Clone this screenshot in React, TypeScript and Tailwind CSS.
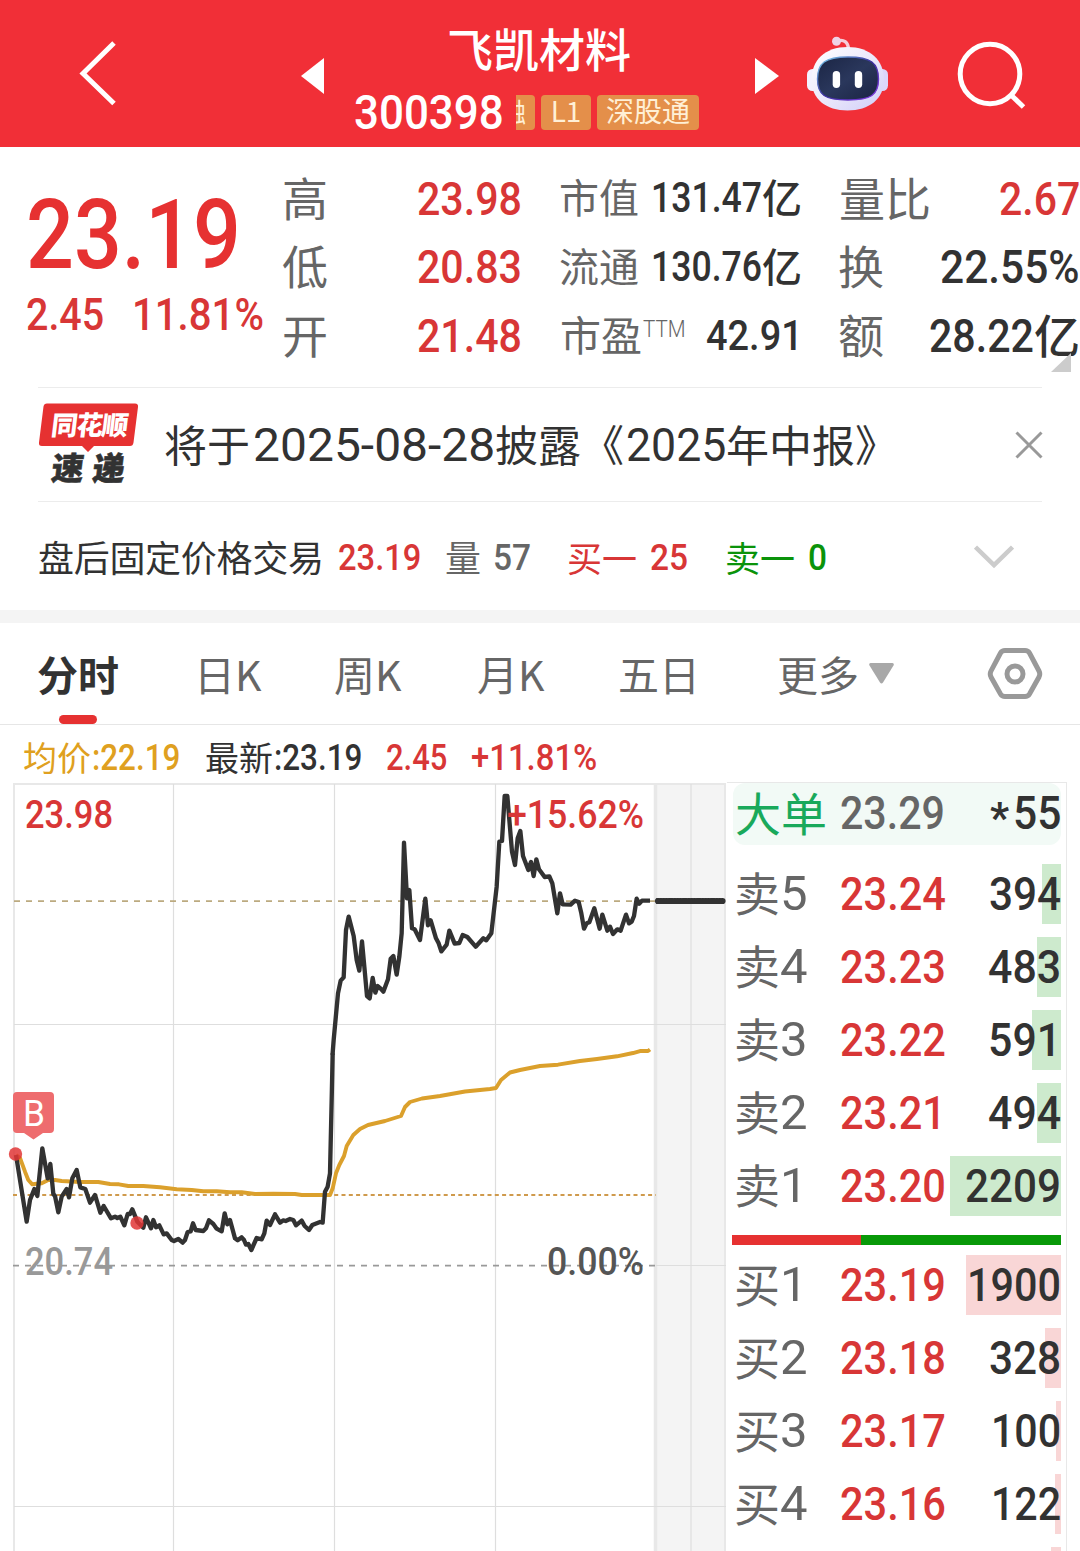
import React from "react";

type FitProps = {
  w: number;
  className?: string;
  children: React.ReactNode;
};

// Squeezes a number horizontally so that it fills exactly `w` pixels
const Fit = ({ w, className = "", children }: FitProps) => {
  const ref = React.useRef<HTMLSpanElement>(null);
  const [scale, setScale] = React.useState(1);

  React.useLayoutEffect(() => {
    if (ref.current) setScale(w / ref.current.offsetWidth);
  }, [w]);

  return (
    <span
      className={`inline-block shrink-0 whitespace-nowrap font-medium leading-none font-['Roboto',sans-serif] ${className}`}
      style={{ width: w }}
    >
      <span
        ref={ref}
        className="inline-block origin-left"
        style={{ transform: `scaleX(${scale})` }}
      >
        {children}
      </span>
    </span>
  );
};

const RobotIcon = () => (
  <svg width="82" height="76" viewBox="807 36 82 76" fill="none">
    <defs>
      <linearGradient id="head" x1="0" y1="0" x2="1" y2="1">
        <stop offset="0" stopColor="#ffffff" />
        <stop offset="0.55" stopColor="#e9e6fb" />
        <stop offset="1" stopColor="#cfcdf8" />
      </linearGradient>
      <linearGradient id="rim" x1="0" y1="0" x2="1" y2="1">
        <stop offset="0" stopColor="#7fd4ee" />
        <stop offset="0.5" stopColor="#3b2fa0" />
        <stop offset="1" stopColor="#8a3be8" />
      </linearGradient>
      <linearGradient id="visor" x1="0" y1="0" x2="1" y2="1">
        <stop offset="0" stopColor="#1b2544" />
        <stop offset="0.5" stopColor="#2a375c" />
        <stop offset="1" stopColor="#1a2342" />
      </linearGradient>
    </defs>
    <path
      d="M837 41 C844 39 848 42 848.5 49"
      stroke="#f6cdd9"
      strokeWidth="3.4"
    />
    <circle cx="836.5" cy="41.2" r="4.5" fill="#efd3e6" />
    <rect x="807" y="69" width="12" height="22" rx="5.5" fill="#f3f1ff" />
    <rect x="876" y="69" width="12" height="22" rx="5.5" fill="#dcd6fb" />
    <path
      d="M847.5 47 C870 47 884 60 884 80 C884 99 869 110.5 847.5 110.5 C826 110.5 811.5 99 811.5 80 C811.5 60 825 47 847.5 47Z"
      fill="url(#head)"
    />
    <path
      d="M848 57 C871 57 878.5 63 878.5 79 C878.5 95 871 100 848 100 C825 100 817.5 95 817.5 79 C817.5 63 825 57 848 57Z"
      fill="url(#visor)"
      stroke="url(#rim)"
      strokeWidth="1.4"
    />
    <rect x="832.7" y="71" width="7.4" height="17" rx="3.7" fill="#fff" />
    <rect x="854.8" y="71" width="7.4" height="17" rx="3.7" fill="#fff" />
  </svg>
);

const Header = () => (
  <header className="flex h-[147px] bg-[#f12f37] text-white">
    <svg
      className="ml-[78px] mt-[40px] shrink-0"
      width="40"
      height="68"
      viewBox="78 40 40 68"
      fill="none"
    >
      <path d="M114 43 L83 73.5 L114 103.5" stroke="#fff" strokeWidth="5" />
    </svg>
    <svg
      className="ml-[183px] mt-[58px] shrink-0"
      width="23"
      height="36"
      viewBox="0 0 23 36"
    >
      <path d="M0 18 L23 0 V36Z" fill="#fff" />
    </svg>
    <div className="ml-[31px] flex w-[344px] shrink-0 flex-col">
      <h1 className="mt-[22px] ml-[92px] text-[46px] font-medium leading-[50px]">
        飞凯材料
      </h1>
      <div className="mt-[23px] flex h-[35px] items-center text-[28px] leading-[35px] text-[#fff0d6]">
        <Fit w={150} className="-ml-px text-[48px] text-white">
          300398
        </Fit>
        <span className="ml-[12px] flex h-[35px] w-[19px] justify-end overflow-hidden rounded-r-[4px] bg-[#e48f4a]">
          <span className="-mt-[2px] mr-[9px] block shrink-0 text-[26px]">
            融
          </span>
        </span>
        <span className="ml-[6px] flex h-[35px] w-[50px] justify-center rounded-[4px] bg-[#e48f4a]">
          <span className="-mt-[2px]">L1</span>
        </span>
        <span className="ml-[6px] flex h-[35px] w-[102px] shrink-0 justify-center rounded-[4px] bg-[#e48f4a]">
          <span className="-mt-[2px]">深股通</span>
        </span>
      </div>
    </div>
    <svg
      className="ml-[56px] mt-[58px] shrink-0"
      width="24"
      height="36"
      viewBox="0 0 24 36"
    >
      <path d="M24 18 L0 0 V36Z" fill="#fff" />
    </svg>
    <div className="ml-[28px] mt-[36px] shrink-0">
      <RobotIcon />
    </div>
    <svg
      className="ml-[66px] mt-[40px] shrink-0"
      width="72"
      height="72"
      viewBox="955 40 72 72"
      fill="none"
      stroke="#fff"
      strokeWidth="5"
    >
      <circle cx="990" cy="74" r="29.8" />
      <path d="M1011 95 L1023.5 107" />
    </svg>
  </header>
);

const Quote = () => (
  <section className="flex h-[240px] text-[#323232]">
    <div className="ml-[26px] w-[257px] shrink-0 text-[#e63131]">
      <Fit w={215} className="mt-[40px] text-[96px]">
        23.19
      </Fit>
      <div className="mt-[9px] flex text-[45px] text-[#d83636]">
        <Fit w={78}>2.45</Fit>
        <Fit w={132} className="ml-[28px]">
          11.81%
        </Fit>
      </div>
    </div>
    <div className="flex w-[277px] shrink-0 flex-col pt-[17px] text-[46px] leading-none">
      {[
        ["高", "23.98"],
        ["低", "20.83"],
        ["开", "21.48"],
      ].map(([label, value]) => (
        <div key={label} className="flex h-[68.5px] items-center">
          <span className="mb-[5px] -ml-px w-[135px] text-[#666]">{label}</span>
          <Fit w={105} className="text-[47px] text-[#d83636]">
            {value}
          </Fit>
        </div>
      ))}
    </div>
    <div className="flex w-[279px] shrink-0 flex-col pt-[17px] text-[40px] leading-none">
      {[
        ["市值", "131.47"],
        ["流通", "130.76"],
      ].map(([label, value]) => (
        <div key={label} className="flex h-[68.5px] items-center">
          <span className="mb-[4px] -ml-px w-[92px] text-[#666]">{label}</span>
          <Fit w={111} className="text-[42px]">
            {value}
          </Fit>
          <span className="mb-[4px] font-medium">亿</span>
        </div>
      ))}
      <div className="flex h-[68.5px] items-center">
        <span className="mb-[4px] w-[83px] text-[41px] text-[#666]">市盈</span>
        <Fit w={43} className="-mt-[12px] text-[23px] text-[#666]">
          <span className="font-light">TTM</span>
        </Fit>
        <Fit w={97} className="ml-[20px] text-[43px]">
          42.91
        </Fit>
      </div>
    </div>
    <div className="relative flex w-[241px] shrink-0 flex-col pt-[17px] text-[46px] leading-none">
      <div className="flex h-[68.5px] items-center justify-between">
        <span className="mb-[5px] text-[#666]">量比</span>
        <Fit w={81} className="text-[47px] text-[#d83636]">
          2.67
        </Fit>
      </div>
      <div className="flex h-[68.5px] items-center justify-between">
        <span className="mb-[5px] -ml-px text-[#666]">换</span>
        <Fit w={140} className="text-[47px]">
          22.55%
        </Fit>
      </div>
      <div className="flex h-[68.5px] items-center">
        <span className="mb-[5px] -ml-px w-[91px] text-[#666]">额</span>
        <Fit w={105} className="text-[47px]">
          28.22
        </Fit>
        <span className="mb-[5px] font-medium">亿</span>
      </div>
      <svg
        className="absolute left-[212px] top-[206px]"
        width="20"
        height="19"
        viewBox="0 0 20 19"
      >
        <path d="M20 0 V19 H0Z" fill="#ccc" />
      </svg>
    </div>
  </section>
);

const NewsLogo = () => (
  <svg width="102" height="84" viewBox="38 402.5 102 84">
    <path
      d="M47 403 H135 Q138.500 403 138 406.500 L133.500 442 Q133 445.500 130 445.500 H94 L88 451.500 L82 445.500 H42 Q38.500 445.500 39 442 L43.500 406 Q44 403 47 403Z"
      fill="#e63131"
    />
    <g
      fontFamily="'Noto Sans CJK SC', sans-serif"
      fontWeight="900"
      transform="skewX(-7)"
    >
      <text x="103.500" y="434.500" fontSize="26.500" textLength="77" fill="#fff">
        同花顺
      </text>
      <text
        x="109.500"
        y="480"
        fontSize="32"
        textLength="73"
        fill="#323232"
        stroke="#323232"
        strokeWidth="0.6"
      >
        速递
      </text>
    </g>
  </svg>
);

const NewsRow = () => (
  <section className="mx-[38px] flex h-[115px] items-center border-y border-[#ececec] text-[43px] leading-none text-[#323232]">
    <NewsLogo />
    <span className="ml-[24px] mb-[2px] w-[89px] shrink-0">将于</span>
    <Fit w={242} className="text-[46px]">
      <span className="font-normal">2025-08-28</span>
    </Fit>
    <span className="mb-[2px] w-[131px] shrink-0">披露《</span>
    <Fit w={100} className="text-[46px]">
      <span className="font-normal">2025</span>
    </Fit>
    <span className="mb-[2px] shrink-0">年中报》</span>
    <svg
      className="ml-auto -mr-px"
      width="28"
      height="28"
      viewBox="0 0 28 28"
      stroke="#999"
      strokeWidth="3"
    >
      <path d="M1.5 1.5 L26.5 26.5 M26.5 1.5 L1.5 26.5" />
    </svg>
  </section>
);

const FixedPriceRow = () => (
  <section className="flex h-[108px] items-center pl-[38px] pt-[2px] text-[36px] leading-none text-[#323232]">
    <span className="mb-[2px] w-[300px] whitespace-nowrap tracking-[-0.3px]">
      盘后固定价格交易
    </span>
    <Fit w={83} className="text-[37px] text-[#d83636]">
      23.19
    </Fit>
    <span className="ml-[24px] mb-[2px] w-[48px] text-[#666]">量</span>
    <Fit w={38} className="text-[37px] text-[#666]">
      57
    </Fit>
    <span className="ml-[36px] mb-[2px] w-[83px] text-[35px] text-[#d83636]">
      买一
    </span>
    <Fit w={38} className="text-[37px] text-[#d83636]">
      25
    </Fit>
    <span className="ml-[37px] mb-[2px] w-[83px] text-[35px] text-[#0a930a]">
      卖一
    </span>
    <Fit w={19} className="text-[37px] text-[#0a930a]">
      0
    </Fit>
    <svg
      className="ml-[147px]"
      width="40"
      height="24"
      viewBox="0 0 40 24"
      fill="none"
    >
      <path d="M1.5 2 L20 20 L38.5 2" stroke="#ccc" strokeWidth="4.5" />
    </svg>
  </section>
);

const Tabs = () => (
  <nav className="flex h-[102px] items-center border-b border-[#e6e6e6] pl-[37px] text-[41px] leading-none text-[#666]">
    <div className="relative flex h-full w-[157px] items-center font-bold text-[#323232]">
      分时
      <span className="absolute bottom-0 left-[22px] h-[9px] w-[38px] rounded-full bg-[#e63131]" />
    </div>
    <span className="w-[140px]">日K</span>
    <span className="w-[143px]">周K</span>
    <span className="w-[141px]">月K</span>
    <span className="w-[159px]">五日</span>
    <span className="w-[92px]">更多</span>
    <svg width="25" height="21" viewBox="0 0 25 21">
      <path
        d="M1.500 0 H23.500 Q25.500 0.500 24.500 2.500 L14 19.500 Q12.500 21.500 11 19.500 L0.500 2.500 Q-0.500 0.500 1.500 0Z"
        fill="#a8a8a8"
      />
    </svg>
    <svg
      className="ml-[93px]"
      width="56"
      height="54"
      viewBox="987 647 56 54"
      fill="none"
      stroke="#999"
      strokeWidth="5"
    >
      <path d="M1005 650.500 H1025 Q1028 650.500 1029.500 653 L1039 671 Q1040.500 674 1039 677 L1029.500 694 Q1028 696.500 1025 696.500 H1005 Q1002 696.500 1000.500 694 L991 677 Q989.500 674 991 671 L1000.500 653 Q1002 650.500 1005 650.500Z" />
      <circle cx="1015" cy="674" r="8" />
    </svg>
  </nav>
);

const PriceInfo = () => (
  <div className="flex h-[58px] items-center pl-[23px] pt-[7px] text-[34px] leading-none text-[#323232]">
    <span className="mb-[2px] w-[69px] text-[#dfa020]">均价</span>
    <Fit w={88} className="text-[36px] text-[#dfa020]">
      :22.19
    </Fit>
    <span className="ml-[25px] mb-[2px] w-[69px]">最新</span>
    <Fit w={88} className="text-[36px]">
      :23.19
    </Fit>
    <Fit w={61} className="ml-[24px] text-[36px] text-[#d83636]">
      2.45
    </Fit>
    <Fit w={126} className="ml-[24px] text-[36px] text-[#d83636]">
      +11.81%
    </Fit>
  </div>
);

const MORNING =
  "48,345 80,545 90,480 103,447 112,468 127,325 143,415 151,372 160,462 165,468 175,517 185,470 200,447 207,472 217,415 230,390 241,442 256,447 270,488 285,465 301,518 311,498 333,535 345,530 352,534 361,530 373,556 383,522 390,522 397,508 412,545 430,563 438,532 453,565 460,540 468,562 478,556 491,583 500,580 515,600 522,603 535,597 548,608 555,600 563,576 572,574 579,550 587,570 610,573 618,565 627,541 640,552 650,566 665,574 674,520 682,553 690,540 705,595 713,601 725,592 732,600 738,614 745,612 754,630 770,594 785,598 793,580 800,542 810,555 825,523 840,548 850,541 857,543 870,537 880,540 888,556 905,542 914,558 927,570 937,555 960,546 968,548 975,455 983,440 990,400 995,180 998,40";
const AFTERNOON =
  "38,824 38,819 41,780 54,640 62,602 71,592 78,450 86,410 101,468 110,540 118,572 126,484 133,560 141,648 149,655 158,594 166,638 173,618 182,626 190,635 204,598 212,536 220,528 230,584 238,530 245,460 252,188 261,355 268,330 276,445 284,448 300,480 316,356 324,436 332,421 348,475 356,490 364,514 380,494 388,452 404,491 418,489 428,465 442,471 467,500 490,475 499,481 514,460 530,320 538,185 546,183 554,48 562,48 576,215 585,255 593,175 601,153 609,228 625,270 633,246 641,288 649,238 657,268 674,291 688,289 697,310 712,400 720,340 728,373 752,374 765,362 776,366 784,400 792,446 800,430 808,427 823,385 839,446 847,404 862,452 870,440 879,462 892,448 902,452 918,404 927,430 935,425 942,408 950,356 958,371 966,362 990,362";
const AVERAGE =
  "16,1155 20,1158 25,1171.7 28.3,1180 32.3,1184.3 41.7,1183.3 48.3,1180 55,1180 61.7,1181 80,1182 98.3,1182 110,1184 119,1184.3 128.3,1186 143.3,1186 160,1187.3 176.7,1189.3 191.7,1190 203.3,1191.3 216.7,1191.3 230,1192.3 241.7,1192.3 255,1194 273.3,1193.7 295,1194 301.7,1195 330,1195 332.7,1188.3 336,1173.3 339.3,1165 344,1156 346.7,1146 353.3,1135 360,1129 368,1125 385,1121 401,1116 405,1107 410,1102 422,1098.5 440,1096 465,1091.5 490,1089 496,1088 501,1080 510,1072.5 520,1070 540,1066 558,1064.7 580,1061 597,1059 617,1056.3 633,1053 640,1051 648,1051 650,1049.5";

const Chart = () => (
  <svg
    className="shrink-0"
    width="727"
    height="768"
    viewBox="0 783 727 768"
    fill="none"
  >
    <rect x="656" y="784" width="70" height="767" fill="#f4f4f4" />
    <g stroke="#e8e8e8" strokeWidth="2">
      <path d="M13 784 H726 M14 784 V1551 M725 784 V1551" />
      <path d="M655.5 784 V1551" strokeWidth="3.5" />
    </g>
    <path
      d="M173.5 784 V1551 M334.5 784 V1551 M495.5 784 V1551 M691 784 V1551 M14 1024.5 H726 M656 1265.5 H726 M14 1506.5 H726"
      stroke="#dedede"
      strokeWidth="1.2"
    />
    <path
      d="M14 901.2 H656"
      stroke="#bcaa80"
      strokeWidth="1.8"
      strokeDasharray="6 6"
    />
    <path
      d="M13 1195 H656"
      stroke="#cf9a4c"
      strokeWidth="2"
      strokeDasharray="4 3.3"
    />
    <path
      d="M13 1265.7 H656"
      stroke="#999"
      strokeWidth="1.8"
      strokeDasharray="6 6"
    />
    <polyline
      points={AVERAGE}
      stroke="#dba02c"
      strokeWidth="3.9"
      strokeLinejoin="round"
    />
    <g
      stroke="#323232"
      strokeWidth="13"
      strokeLinejoin="round"
    >
      <polyline points={MORNING} transform="translate(0 1040) scale(0.33333)" />
      <polyline
        points={AFTERNOON}
        transform="translate(320 780) scale(0.33333)"
      />
    </g>
    <path d="M656 901 H723" stroke="#323232" strokeWidth="5.4" />
    <path
      d="M658 901 H723"
      stroke="#323232"
      strokeWidth="6.2"
      strokeLinecap="round"
      strokeDasharray="0.1 2.7"
    />
    <g fill="#e03636" fillOpacity="0.85">
      <circle cx="15.5" cy="1154" r="6.7" />
      <circle cx="137" cy="1223" r="6.7" />
    </g>
    <path
      d="M17 1092 H50 Q54 1092 54 1096 V1129 Q54 1133 50 1133 H43 L33.5 1139.5 L24 1133 H17 Q13 1133 13 1129 V1096 Q13 1092 17 1092Z"
      fill="#ee6c6e"
    />
    <g fontFamily="Roboto, sans-serif" fontWeight="500" fontSize="38">
      <text
        x="23"
        y="1126"
        fontWeight="400"
        fontSize="36"
        fill="#fff"
        textLength="22"
        lengthAdjust="spacingAndGlyphs"
      >
        B
      </text>
      <text
        x="25"
        y="828"
        fill="#d83636"
        textLength="88"
        lengthAdjust="spacingAndGlyphs"
      >
        23.98
      </text>
      <text
        x="507"
        y="828"
        fill="#d83636"
        textLength="137"
        lengthAdjust="spacingAndGlyphs"
      >
        +15.62%
      </text>
      <text
        x="25"
        y="1275"
        fill="#999"
        textLength="88"
        lengthAdjust="spacingAndGlyphs"
      >
        20.74
      </text>
      <text
        x="547"
        y="1275"
        fill="#555"
        textLength="97"
        lengthAdjust="spacingAndGlyphs"
      >
        0.00%
      </text>
    </g>
  </svg>
);

type Level = {
  label: string;
  level: string;
  price: string;
  volume: string;
  textWidth: number;
  barWidth: number;
};

const SELLS: Level[] = [
  { label: "卖", level: "5", price: "23.24", volume: "394", textWidth: 72, barWidth: 19 },
  { label: "卖", level: "4", price: "23.23", volume: "483", textWidth: 73, barWidth: 24 },
  { label: "卖", level: "3", price: "23.22", volume: "591", textWidth: 73, barWidth: 29 },
  { label: "卖", level: "2", price: "23.21", volume: "494", textWidth: 73, barWidth: 24 },
  { label: "卖", level: "1", price: "23.20", volume: "2209", textWidth: 96, barWidth: 111 },
];

const BUYS: Level[] = [
  { label: "买", level: "1", price: "23.19", volume: "1900", textWidth: 94, barWidth: 95 },
  { label: "买", level: "2", price: "23.18", volume: "328", textWidth: 72, barWidth: 16 },
  { label: "买", level: "3", price: "23.17", volume: "100", textWidth: 70, barWidth: 5 },
  { label: "买", level: "4", price: "23.16", volume: "122", textWidth: 70, barWidth: 6 },
];

const LevelRow = ({ row, barClass }: { row: Level; barClass: string }) => (
  <div className="relative mb-[13px] flex h-[60px] items-center pl-[7px] text-[46px] leading-none text-[#666]">
    <span
      className={`absolute right-[5px] top-0 h-full ${barClass}`}
      style={{ width: row.barWidth }}
    />
    <span className="mb-[7px] w-[46px]">{row.label}</span>
    <Fit w={28} className="mb-px text-[49px]">
      <span className="font-normal">{row.level}</span>
    </Fit>
    <Fit w={106} className="mb-[2px] ml-[32px] text-[47px] text-[#d83636]">
      {row.price}
    </Fit>
    <Fit
      w={row.textWidth}
      className="relative mb-[2px] ml-auto mr-[5px] text-[47px] text-[#323232]"
    >
      {row.volume}
    </Fit>
  </div>
);

const OrderBook = () => (
  <div className="-mt-px h-[769px] w-[340px] shrink-0 overflow-hidden border-r border-t border-[#e8e8e8]">
    <div className="ml-[6px] mr-[5px] mb-[19px] flex h-[62px] items-center rounded-[12px] bg-[#f2faf6] pl-[2px] text-[46px] leading-none">
      <span className="mb-[6px] w-[105px] text-[#19a95b]">大单</span>
      <Fit w={105} className="mb-[4px] text-[47px] text-[#666]">
        23.29
      </Fit>
      <Fit w={19} className="ml-auto mt-[8px] text-[42px] text-[#323232]">
        <span className="font-bold">*</span>
      </Fit>
      <Fit w={48} className="mb-[4px] ml-[4px] text-[47px] text-[#323232]">
        55
      </Fit>
    </div>
    {SELLS.map((row) => (
      <LevelRow key={row.price} row={row} barClass="bg-[#cdeacd]" />
    ))}
    <div className="ml-[5px] mr-[5px] mt-[19px] mb-[10px] flex h-[10px]">
      <span className="w-[129px] bg-[#e63131]" />
      <span className="flex-1 bg-[#089908]" />
    </div>
    {BUYS.map((row) => (
      <LevelRow key={row.price} row={row} barClass="bg-[#f9d6d6]" />
    ))}
    <div className="ml-auto mr-[5px] h-[10px] w-[10px] bg-[#f9d6d6]" />
  </div>
);

const App = () => {
  return (
    <div className="h-[1551px] w-[1080px] overflow-hidden bg-white font-['Noto_Sans_CJK_SC',sans-serif]">
      <Header />
      <Quote />
      <NewsRow />
      <FixedPriceRow />
      <div className="h-[13px] bg-[#f4f4f4]" />
      <Tabs />
      <PriceInfo />
      <div className="flex h-[768px]">
        <Chart />
        <OrderBook />
      </div>
    </div>
  );
};

export default App;
